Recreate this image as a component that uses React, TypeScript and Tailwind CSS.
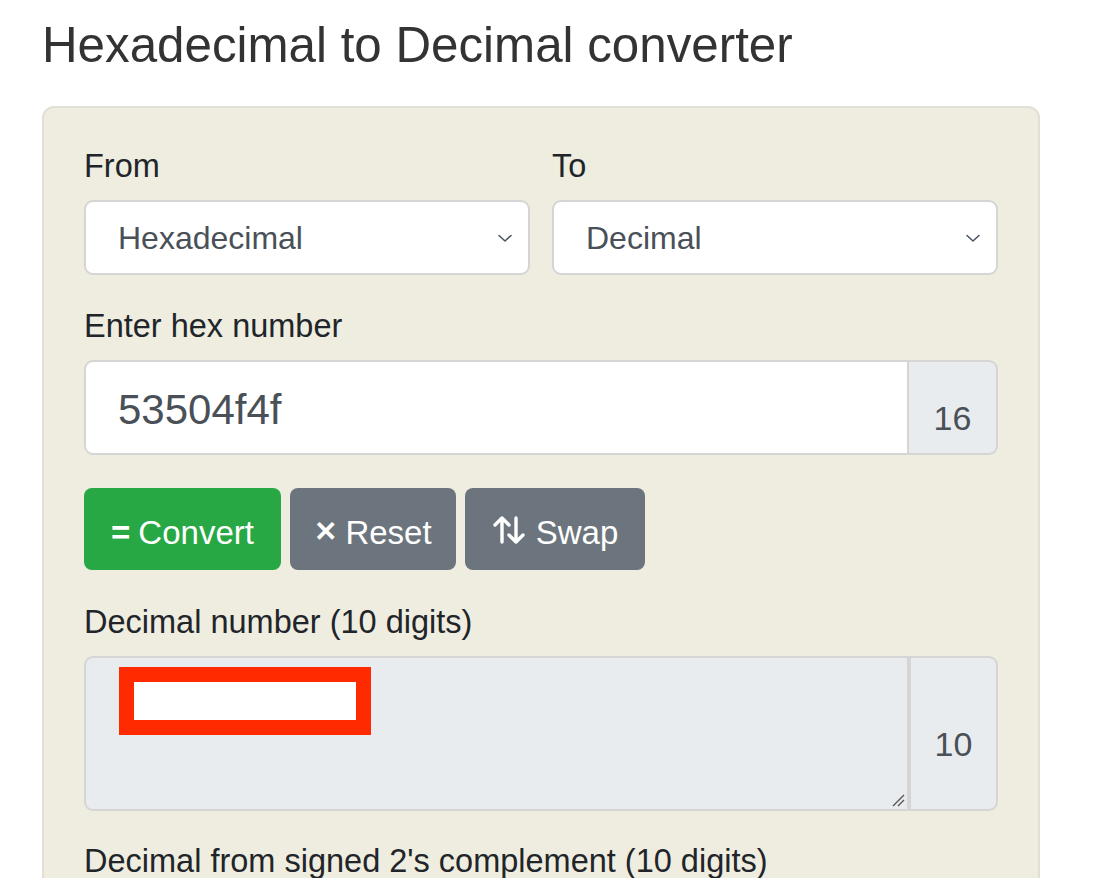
import React from "react";

const sans = { fontFamily: '"Liberation Sans", Arial, sans-serif' };

function Chevron() {
  return (
    <svg width="18" height="12" viewBox="0 0 18 12" fill="none" stroke="#4b5563" strokeWidth="1.6" strokeLinecap="round" strokeLinejoin="round">
      <path d="M3 3.5 L9 9 L15 3.5" />
    </svg>
  );
}

function Select({ value }: { value: string }) {
  return (
    <div className="h-[75px] bg-white border-2 border-[#d5d5d5] rounded-[9px] flex items-center justify-between pl-[32px] pr-[14px]">
      <span className="text-[32px] text-[#495057]">{value}</span>
      <Chevron />
    </div>
  );
}

export default function App() {
  return (
    <div className="min-h-[878px] bg-white text-[#212529] overflow-hidden" style={sans}>
      <div className="pl-[42px] w-[1040px]">
        <h1 className="text-[49.3px] leading-none pt-[20px] pb-[37px] text-[#333]">Hexadecimal to Decimal converter</h1>
        <div className="bg-[#efede0] border-2 border-[#e2e0d6] rounded-[12px] px-[40px] pt-[40px] pb-[60px]">
          <div className="flex gap-[22px]">
            <div className="flex-1 flex flex-col">
              <label className="text-[32.5px] leading-[36px] mb-[16px]">From</label>
              <Select value="Hexadecimal" />
            </div>
            <div className="flex-1 flex flex-col">
              <label className="text-[32.5px] leading-[36px] mb-[16px]">To</label>
              <Select value="Decimal" />
            </div>
          </div>
          <label className="block text-[32.5px] leading-[36px] mt-[33px] mb-[16px]">Enter hex number</label>
          <div className="flex h-[95px]">
            <div className="flex-1 bg-white border-2 border-[#d5d5d5] rounded-l-[9px] flex items-center pl-[32px] pt-[4px]">
              <span className="text-[42px] text-[#495057]">53504f4f</span>
            </div>
            <div className="w-[89px] bg-[#e9ecef] border-2 border-l-0 border-[#d5d5d5] rounded-r-[9px] flex items-center justify-center pt-[22px]">
              <span className="text-[34px] text-[#495057]">16</span>
            </div>
          </div>
          <div className="flex gap-[9px] mt-[33px]">
            <button className="h-[82px] w-[197px] bg-[#28a745] text-white rounded-[8px] text-[33px] flex items-center justify-center gap-[8px] pt-[6px]">
              <span className="font-bold">=</span><span>Convert</span>
            </button>
            <button className="h-[82px] w-[166px] bg-[#6c757d] text-white rounded-[8px] text-[33px] flex items-center justify-center gap-[8px] pt-[6px]">
              <span className="font-bold text-[28px]">✕</span><span>Reset</span>
            </button>
            <button className="h-[82px] w-[180px] bg-[#6c757d] text-white rounded-[8px] text-[33px] flex items-center justify-center gap-[8px] pt-[6px]">
              <svg className="-mt-[4px]" width="36" height="32" viewBox="0 0 36 32" fill="none" stroke="white" strokeWidth="3.4" strokeLinecap="round" strokeLinejoin="round">
                <path d="M10 28 V4 M3 11 L10 4 L17 11" />
                <path d="M24 4 V28 M17 21 L24 28 L31 21" />
              </svg>
              <span>Swap</span>
            </button>
          </div>
          <label className="block text-[32.5px] leading-[36px] mt-[34px] mb-[16px]">Decimal number (10 digits)</label>
          <div className="flex h-[155px]">
            <div className="flex-1 relative bg-[#e9ecef] border-2 border-[#d5d5d5] rounded-l-[9px]">
              <div className="absolute left-[33px] top-[9px] w-[252px] h-[68px] bg-white border-[15px] border-[#ff2a00]" />
              <svg className="absolute right-[2px] bottom-[2px]" width="14" height="14" viewBox="0 0 14 14" stroke="#555" strokeWidth="1.4">
                <path d="M2 13 L13 2 M7 13 L13 7" />
              </svg>
            </div>
            <div className="w-[89px] bg-[#e9ecef] border-2 border-l-2 border-[#d5d5d5] rounded-r-[9px] flex items-center justify-center pt-[22px]">
              <span className="text-[34px] text-[#495057]">10</span>
            </div>
          </div>
          <label className="block text-[32.5px] leading-[36px] mt-[32px]">Decimal from signed 2's complement (10 digits)</label>
        </div>
      </div>
    </div>
  );
}
